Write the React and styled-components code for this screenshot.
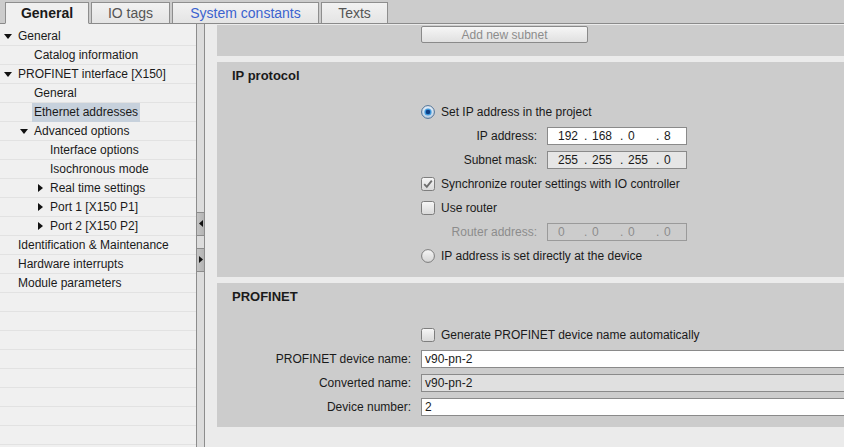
import React from 'react';
import styled, { createGlobalStyle } from 'styled-components';

const GlobalStyle = createGlobalStyle`
  html, body {
    margin: 0;
    padding: 0;
    background: #ebebeb;
  }
  body {
    font-family: "Liberation Sans", Arial, sans-serif;
    font-size: 12px;
    color: #1a1a1a;
  }
`;

const Page = styled.div`
  width: 844px;
  height: 447px;
  overflow: hidden;
  display: flex;
  flex-direction: column;
  background: #ebebeb;
`;

const TabBar = styled.div`
  height: 23px;
  display: flex;
  align-items: flex-end;
  gap: 2px;
  padding-left: 5px;
  background: #cccccc;
  border-bottom: 1px solid #8a8a8a;
  flex-shrink: 0;
`;

const Tab = styled.div`
  width: ${(p) => p.$w}px;
  box-sizing: border-box;
  height: 22px;
  display: flex;
  align-items: center;
  justify-content: center;
  font-size: 14px;
  margin-bottom: -1px;
  border: 1px solid #8e8e8e;
  border-bottom: 1px solid ${(p) => (p.$active ? '#f0f0f0' : '#8a8a8a')};
  background: ${(p) => (p.$active ? '#f0f0f0' : 'linear-gradient(#f2f2f2, #e4e4e4)')};
  font-weight: ${(p) => (p.$active ? 'bold' : 'normal')};
  color: ${(p) => p.$color || '#555555'};
  ${(p) => p.$active && 'color: #1a1a1a;'}
`;

const Body = styled.div`
  flex: 1;
  display: flex;
  min-height: 0;
`;

const Tree = styled.div`
  width: 196px;
  flex-shrink: 0;
  background: #f0f0f0;
  padding-top: 3px;
  overflow: hidden;
`;

const TreeRow = styled.div`
  height: 18px;
  border-bottom: 1px solid #e2e2e2;
  display: flex;
  align-items: center;
  padding-left: ${(p) => 1 + p.$level * 16}px;
  white-space: nowrap;
`;

const Arrow = styled.span`
  width: 14px;
  margin-right: 3px;
  display: flex;
  justify-content: center;
  align-items: center;
  flex-shrink: 0;
`;

const TreeLabel = styled.span`
  padding: 2px 2px 3px;
  margin-left: -2px;
  background: ${(p) => (p.$selected ? '#c7d1dc' : 'transparent')};
`;

const Splitter = styled.div`
  width: 7px;
  flex-shrink: 0;
  background: #dcdcdc;
  border-left: 1px solid #8c8c8c;
  border-right: 1px solid #8c8c8c;
  display: flex;
  flex-direction: column;
  justify-content: center;
  gap: 12px;
  padding-top: 12px;
`;

const SplitButton = styled.div`
  height: ${(p) => p.$h}px;
  border-top: 1px solid #8c8c8c;
  border-bottom: 1px solid #8c8c8c;
  background: linear-gradient(90deg, #c4c4c4, #b4b4b4);
  display: flex;
  align-items: center;
  justify-content: center;
`;

const Content = styled.div`
  flex: 1;
  margin-left: 12px;
  padding-top: 1px;
  display: flex;
  flex-direction: column;
  gap: 6px;
  overflow: hidden;
`;

const Section = styled.div`
  background: #cccccc;
  padding: ${(p) => p.$pad || '5px 0 10px'};
  display: grid;
  grid-template-columns: 204px 1fr;
  align-content: start;
`;

const Heading = styled.div`
  grid-column: 1 / -1;
  padding-left: 15px;
  font-size: 13px;
  font-weight: bold;
  line-height: 16px;
  margin-bottom: ${(p) => p.$gap}px;
`;

const Row = styled.div`
  grid-column: ${(p) => (p.$full ? '1 / -1' : '2')};
  height: 24px;
  display: flex;
  align-items: center;
  ${(p) => p.$full && 'display: grid; grid-template-columns: 194px 1fr; column-gap: 10px; align-items: center;'}
`;

const SubRow = styled.div`
  height: 24px;
  display: grid;
  grid-template-columns: 116px 140px;
  column-gap: 10px;
  align-items: center;
`;

const Label = styled.span`
  text-align: right;
  white-space: nowrap;
  color: ${(p) => (p.$disabled ? '#8c8c8c' : '#1a1a1a')};
`;

const OptionText = styled.span`
  margin-left: 6px;
  white-space: nowrap;
`;

const Field = styled.div`
  height: 16px;
  border: 1px solid ${(p) => (p.$disabled ? '#9a9a9a' : '#8a8a8a')};
  background: ${(p) => p.$bg || '#ffffff'};
  display: flex;
  align-items: center;
  padding-left: ${(p) => p.$padLeft || 10}px;
  color: ${(p) => (p.$disabled ? '#8c8c8c' : '#1a1a1a')};
  white-space: nowrap;
  ${(p) => p.$wide && 'margin-right: -4px;'}
`;

const Octet = styled.span`
  width: ${(p) => (p.$first ? 26 : 36)}px;
  display: flex;
  flex-shrink: 0;
`;

const Dot = styled.span`
  width: 8px;
`;

const SubnetButton = styled.div`
  grid-column: 2;
  width: 165px;
  height: 15px;
  border: 1px solid #8a8a8a;
  border-radius: 2px;
  background: linear-gradient(#f6f6f6, #e0e0e0);
  color: #8c8c8c;
  display: flex;
  align-items: center;
  justify-content: center;
`;

const TriangleDown = () => (
  <svg width="8" height="5" viewBox="0 0 8 5">
    <path d="M0 0 H8 L4 5 Z" fill="#111" />
  </svg>
);

const TriangleRight = () => (
  <svg width="5" height="8" viewBox="0 0 5 8">
    <path d="M0 0 V8 L5 4 Z" fill="#111" />
  </svg>
);

const Radio = ({ checked }) => (
  <svg width="14" height="14" viewBox="0 0 14 14">
    <defs>
      <linearGradient id={checked ? 'rg-on' : 'rg-off'} x1="0" y1="0" x2="0" y2="1">
        <stop offset="0" stopColor={checked ? '#e4eef8' : '#f6f6f6'} />
        <stop offset="1" stopColor={checked ? '#b9cde2' : '#d4d4d4'} />
      </linearGradient>
    </defs>
    <circle cx="7" cy="7" r="6.4" fill={`url(#${checked ? 'rg-on' : 'rg-off'})`} stroke={checked ? '#4d6f93' : '#7a7a7a'} strokeWidth="1" />
    {checked && <circle cx="7" cy="7" r="3.6" fill="#3f9be0" />}
    {checked && <circle cx="7" cy="7" r="2.3" fill="#0d3f86" />}
  </svg>
);

const Checkbox = ({ checked }) => (
  <svg width="14" height="14" viewBox="0 0 14 14">
    <defs>
      <linearGradient id="cb" x1="0" y1="0" x2="0" y2="1">
        <stop offset="0" stopColor="#f7f7f7" />
        <stop offset="1" stopColor="#d8d8d8" />
      </linearGradient>
    </defs>
    <rect x="0.5" y="0.5" width="13" height="13" rx="2" fill="url(#cb)" stroke="#7e7e7e" />
    {checked && <path d="M3.2 7.2 L5.8 9.8 L10.8 3.6" fill="none" stroke="#6e6e6e" strokeWidth="1.9" />}
  </svg>
);

const IpValue = ({ parts }) =>
  parts.map((v, i) => (
    <Octet key={i} $first={i === 0}>
      {i > 0 && <Dot>.</Dot>}
      {v}
    </Octet>
  ));

const treeItems = [
  { text: 'General', level: 0, arrow: 'down' },
  { text: 'Catalog information', level: 1 },
  { text: 'PROFINET interface [X150]', level: 0, arrow: 'down' },
  { text: 'General', level: 1 },
  { text: 'Ethernet addresses', level: 1, selected: true },
  { text: 'Advanced options', level: 1, arrow: 'down' },
  { text: 'Interface options', level: 2 },
  { text: 'Isochronous mode', level: 2 },
  { text: 'Real time settings', level: 2, arrow: 'right' },
  { text: 'Port 1 [X150 P1]', level: 2, arrow: 'right' },
  { text: 'Port 2 [X150 P2]', level: 2, arrow: 'right' },
  { text: 'Identification & Maintenance', level: 0 },
  { text: 'Hardware interrupts', level: 0 },
  { text: 'Module parameters', level: 0 },
  ...Array.from({ length: 9 }, () => ({ text: '', level: 0 })),
];

const tabs = [
  { text: 'General', active: true, w: 84 },
  { text: 'IO tags', w: 79 },
  { text: 'System constants', color: '#3b63cf', w: 147 },
  { text: 'Texts', w: 67 },
];

export default function App() {
  return (
    <Page>
      <GlobalStyle />
      <TabBar>
        {tabs.map((t) => (
          <Tab key={t.text} $active={t.active} $color={t.color} $w={t.w}>
            {t.text}
          </Tab>
        ))}
      </TabBar>
      <Body>
        <Tree>
          {treeItems.map((item, i) => (
            <TreeRow key={i} $level={item.level}>
              {item.text && (
                <>
                  <Arrow>
                    {item.arrow === 'down' && <TriangleDown />}
                    {item.arrow === 'right' && <TriangleRight />}
                  </Arrow>
                  <TreeLabel $selected={item.selected}>{item.text}</TreeLabel>
                </>
              )}
            </TreeRow>
          ))}
        </Tree>
        <Splitter>
          <SplitButton $h={22}>
            <svg width="4" height="7" viewBox="0 0 4 7">
              <path d="M4 0 V7 L0 3.5 Z" fill="#111" />
            </svg>
          </SplitButton>
          <SplitButton $h={22}>
            <svg width="4" height="7" viewBox="0 0 4 7">
              <path d="M0 0 V7 L4 3.5 Z" fill="#111" />
            </svg>
          </SplitButton>
        </Splitter>
        <Content>
          <Section $pad="1px 0 13px">
            <SubnetButton>Add new subnet</SubnetButton>
          </Section>

          <Section $pad="6px 0 9px">
            <Heading $gap={16}>IP protocol</Heading>
            <Row>
              <Radio checked />
              <OptionText>Set IP address in the project</OptionText>
            </Row>
            <Row>
              <SubRow>
                <Label>IP address:</Label>
                <Field>
                  <IpValue parts={['192', '168', '0', '8']} />
                </Field>
              </SubRow>
            </Row>
            <Row>
              <SubRow>
                <Label>Subnet mask:</Label>
                <Field $bg="#e6e6e6">
                  <IpValue parts={['255', '255', '255', '0']} />
                </Field>
              </SubRow>
            </Row>
            <Row>
              <Checkbox checked />
              <OptionText>Synchronize router settings with IO controller</OptionText>
            </Row>
            <Row>
              <Checkbox />
              <OptionText>Use router</OptionText>
            </Row>
            <Row>
              <SubRow>
                <Label $disabled>Router address:</Label>
                <Field $disabled $bg="transparent">
                  <IpValue parts={['0', '0', '0', '0']} />
                </Field>
              </SubRow>
            </Row>
            <Row>
              <Radio />
              <OptionText>IP address is set directly at the device</OptionText>
            </Row>
          </Section>

          <Section $pad="6px 0 8px">
            <Heading $gap={18}>PROFINET</Heading>
            <Row>
              <Checkbox />
              <OptionText>Generate PROFINET device name automatically</OptionText>
            </Row>
            <Row $full>
              <Label>PROFINET device name:</Label>
              <Field $wide $padLeft={3}>v90-pn-2</Field>
            </Row>
            <Row $full>
              <Label>Converted name:</Label>
              <Field $wide $padLeft={3} $bg="#e0e0e0">v90-pn-2</Field>
            </Row>
            <Row $full>
              <Label>Device number:</Label>
              <Field $wide $padLeft={3}>2</Field>
            </Row>
          </Section>
        </Content>
      </Body>
    </Page>
  );
}
